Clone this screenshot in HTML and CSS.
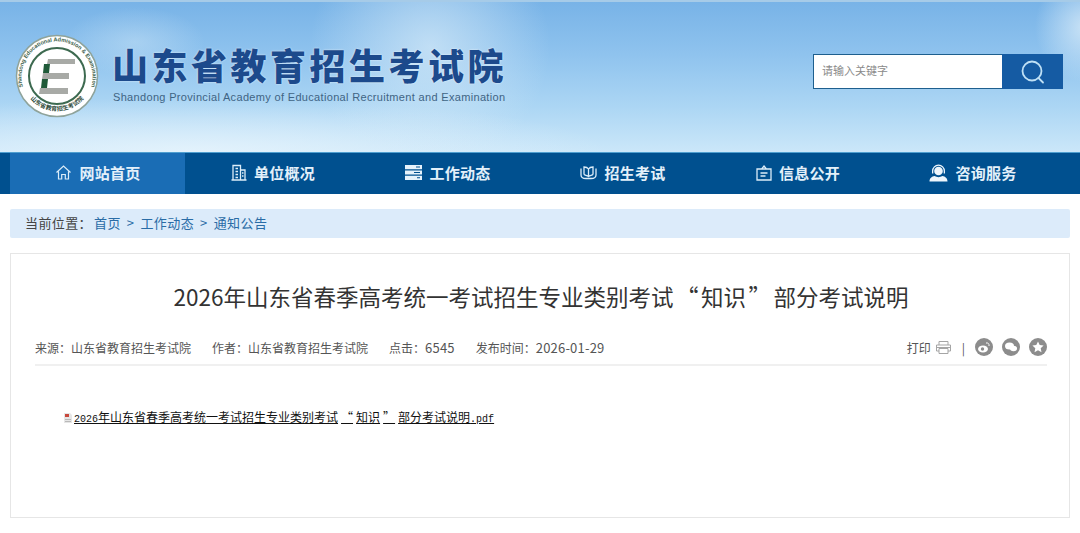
FILE: index.html
```html
<!DOCTYPE html>
<html lang="zh-CN">
<head>
    <meta charset="UTF-8">
    <meta name="viewport" content="width=device-width, initial-scale=1.0">
    <title>2026年山东省春季高考统一考试招生专业类别考试“知识”部分考试说明</title>
    <link rel="stylesheet" href="styles.css">
</head>
<body>
    <header class="site-header">
        <div class="brand">
            <svg class="logo" width="84" height="84" viewBox="0 0 84 84">
                <defs>
                    <path id="ringTop" d="M9 56 A35.500 35.500 0 1 1 75 56"/>
                    <path id="ringBottom" d="M14 63 A35 35 0 0 0 70 63"/>
                </defs>
                <circle cx="42" cy="42" r="40.500" fill="#fff" stroke="#8fa39a" stroke-width="1.500"/>
                <circle cx="42" cy="42" r="28" fill="#fff" stroke="#3d6a50" stroke-width="2"/>
                <text class="logo-en"><textPath href="#ringTop" startOffset="50%" text-anchor="middle">Shandong Educational Admission &amp; Examination</textPath></text>
                <text class="logo-cn"><textPath href="#ringBottom" startOffset="50%" text-anchor="middle">山东省教育招生考试院</textPath></text>
                <path d="M33 25H60V30H32Z M28 39H54V45H27Z M25 54H53V60H24Z" fill="#a8aaa6"/>
                <path d="M29 30H35L34 39H28Z M27 45H33L32 54H26Z" fill="#1f5a38"/>
            </svg>
            <div class="brand-text">
                <div class="brand-cn">山东省教育招生考试院</div>
                <div class="brand-en">Shandong Provincial Academy of Educational Recruitment and Examination</div>
            </div>
        </div>
        <form class="search">
            <div class="search-input">请输入关键字</div>
            <div class="search-btn">
                <svg width="26" height="26" viewBox="0 0 26 26" fill="none" stroke="#bfe0f5" stroke-width="1.800">
                    <circle cx="12" cy="12" r="9.500"/>
                    <path d="M18.500 19L23 23.500" stroke-linecap="round"/>
                </svg>
            </div>
        </form>
    </header>

    <nav class="nav">
        <a class="nav-item active">
            <svg width="17" height="17" viewBox="0 0 17 17" fill="none" stroke="#dcedf9" stroke-width="1.200"><path d="M1.500 8.500L8.500 2l7 6.500M3.500 7.500V15h3.200v-4.500h3.600V15h3.200V7.500"/></svg>
            网站首页
        </a>
        <a class="nav-item">
            <svg width="16" height="17" viewBox="0 0 16 17" fill="none" stroke="#dcedf9" stroke-width="1.300"><path d="M2 16V1.500h7.500V16M9.500 6H14v10M0.500 16h15M4.500 4.500h2.500M4.500 7.500h2.500M4.500 10.500h2.500M4.500 13.500h2.500M11 9h1.500M11 12h1.500"/></svg>
            单位概况
        </a>
        <a class="nav-item">
            <svg width="17" height="17" viewBox="0 0 17 17" fill="#e6f2fb"><path d="M0 1h17v4.200H0zM0 6.400h17v4.200H0zM0 11.800h17V16H0z"/><path d="M11 2.500h4v1h-4zM9 8h6v1H9zM12 13.300h3v1h-3z" fill="#00508f"/></svg>
            工作动态
        </a>
        <a class="nav-item">
            <svg width="17" height="15" viewBox="0 0 17 15" fill="none" stroke="#dcedf9" stroke-width="1.300"><path d="M1 3.500V10c0 2.500 2.500 3.500 5 3.500h5c2.500 0 5-1 5-3.500V3.500"/><path d="M8.500 4C7.500 2.500 6 2 4 2v7c0 1.500 3 1 4.500 2.500C10 10 13 10.500 13 9V2c-2 0-3.500.5-4.500 2zV11"/></svg>
            招生考试
        </a>
        <a class="nav-item">
            <svg width="16" height="16" viewBox="0 0 16 16" fill="none" stroke="#dcedf9" stroke-width="1.300"><path d="M1 4h14v11H1zM8 1l2.500 3h-5zM4.500 8h7M4.500 11h5"/></svg>
            信息公开
        </a>
        <a class="nav-item">
            <svg width="19" height="18" viewBox="0 0 19 18" fill="#eef6fc"><path d="M9.500.5a6.500 6.500 0 0 1 6.500 6.500v2.500h-1.300V7a5.200 5.200 0 0 0-10.400 0v2.500H3V7A6.500 6.500 0 0 1 9.500.5z"/><circle cx="9.500" cy="7" r="4.300"/><path d="M.5 17.500c0-3.500 2.500-5 5-5.500 2.500 1.500 5.500 1.500 8 0 2.500.5 5 2 5 5.500z"/></svg>
            咨询服务
        </a>
    </nav>

    <main class="content">
        <div class="crumbs">
            <span class="here">当前位置：</span><a>首页</a><span class="sep">&gt;</span><a>工作动态</a><span class="sep">&gt;</span><a>通知公告</a>
        </div>

        <article class="card">
            <h1 class="title">2026年山东省春季高考统一考试招生专业类别考试<span class="q">“</span>知识<span class="q">”</span>部分考试说明</h1>
            <div class="meta">
                <div class="meta-left">
                    <span>来源：山东省教育招生考试院</span>
                    <span>作者：山东省教育招生考试院</span>
                    <span>点击：<span class="num">6545</span></span>
                    <span>发布时间：<span class="num">2026-01-29</span></span>
                </div>
                <div class="meta-right">
                    <span class="print">打印</span>
                    <svg class="print-icon" width="15" height="15" viewBox="0 0 15 15" fill="none" stroke="#a5a5a5"><path d="M3 5V1.500h9V5M3 11H.5V5h14v6H12M3 8.500h9V13.500H3zM1 7.500h13"/></svg>
                    <span class="divider">|</span>
                    <svg class="share" width="18" height="18" viewBox="0 0 18 18"><circle cx="9" cy="9" r="9" fill="#8c8c8c"/><ellipse cx="8" cy="11" rx="5" ry="3.500" fill="#fff"/><circle cx="7.500" cy="11" r="1.700" fill="#8c8c8c"/><path d="M11 5c2-.5 3.500 1 3 3" fill="none" stroke="#fff"/></svg>
                    <svg class="share" width="18" height="18" viewBox="0 0 18 18"><circle cx="9" cy="9" r="9" fill="#8c8c8c"/><ellipse cx="7.500" cy="8" rx="4.500" ry="3.500" fill="#fff"/><ellipse cx="11.500" cy="10.500" rx="3.500" ry="2.800" fill="#fff"/></svg>
                    <svg class="share" width="18" height="18" viewBox="0 0 18 18"><circle cx="9" cy="9" r="9" fill="#8c8c8c"/><path d="M9 3.500l1.700 3.600 3.900.5-2.900 2.700.8 3.900L9 12.300l-3.500 1.900.8-3.900-2.900-2.700 3.900-.5z" fill="#fff"/></svg>
                </div>
            </div>
            <p class="attachment">
                <svg width="8" height="10" viewBox="0 0 8 10"><path d="M0 0h6l2 2v8H0z" fill="#e6e6e6"/><path d="M1 1h4v3H1z" fill="#c8483c"/><path d="M1 6h6v1H1zM1 8h6v1H1z" fill="#b9b9b9"/></svg>
                <a><span class="mono">2026</span>年山东省春季高考统一考试招生专业类别考试<span class="wq">“</span>知识<span class="wq">”</span>部分考试说明<span class="mono">.pdf</span></a>
            </p>
        </article>
    </main>
</body>
</html>
```

FILE: styles.css
```css
* {
    box-sizing: border-box;
}
body {
    margin: 0;
    background-color: #fff;
    color: #333;
    font-family: "Noto Sans CJK SC", sans-serif;
}
.site-header {
    height: 152px;
    display: flex;
    justify-content: space-between;
    align-items: flex-start;
    padding: 34px 17px 0 15px;
    border-top: 2px solid #a6cbe8;
    background:
        radial-gradient(ellipse 50px 55px at 1085px 25px, rgba(225, 240, 250, .75), rgba(225, 240, 250, 0)),
        radial-gradient(ellipse 120px 120px at 430px 45px, rgba(215, 235, 248, .7), rgba(215, 235, 248, 0)),
        radial-gradient(ellipse 70px 35px at 135px 40px, rgba(215, 235, 248, .4), rgba(215, 235, 248, 0)),
        radial-gradient(ellipse 420px 55px at 190px 150px, rgba(235, 246, 253, .75), rgba(235, 246, 253, 0)),
        linear-gradient(to bottom, #78b3e7 0%, #8fc3ee 35%, #acd6f4 70%, #cbe7f9 100%);
}
.brand {
    display: flex;
    align-items: flex-start;
    gap: 14px;
}
.logo {
    flex: none;
    margin-top: -2px;
}
.logo-en {
    font-family: "Liberation Sans", sans-serif;
    font-size: 5.600px;
    font-weight: bold;
    fill: #3d5f4c;
}
.logo-cn {
    font-size: 6px;
    font-weight: bold;
    fill: #2f4a3a;
}
.brand-text {
    padding-top: 5px;
}
.brand-cn {
    font-size: 36px;
    line-height: 46px;
    font-weight: 900;
    letter-spacing: 3.500px;
    white-space: nowrap;
    color: #1c4a8c;
    margin-left: -1px;
    text-shadow: 0 0 2px rgba(255, 255, 255, .8);
}
.brand-en {
    font-family: "Liberation Sans", sans-serif;
    font-size: 11px;
    line-height: 14px;
    letter-spacing: .33px;
    white-space: nowrap;
    color: #3f6484;
    margin-top: 3px;
}
.search {
    display: flex;
    height: 35px;
    margin: 18px 0 0;
}
.search-input {
    width: 189px;
    padding-left: 8px;
    border: 1px solid #1e5f8e;
    border-right: 0;
    background-color: #fff;
    color: #8a8a8a;
    font-size: 11px;
    line-height: 31px;
}
.search-btn {
    width: 61px;
    display: flex;
    align-items: center;
    justify-content: center;
    background-color: #155ba3;
}
.nav {
    height: 42px;
    display: flex;
    padding: 0 10px;
    background-color: #00508f;
    border-top: 1px solid #4f9fd0;
}
.nav-item {
    width: 175px;
    display: flex;
    align-items: center;
    justify-content: center;
    gap: 7px;
    padding: 0 0 2px 1px;
    color: #e3f0fa;
    font-size: 15px;
    font-weight: bold;
    letter-spacing: .3px;
}
.nav-item.active {
    background-color: #1a6db5;
}
.content {
    padding: 15px 10px 15px;
}
.crumbs {
    height: 29px;
    padding: 0 0 2px 15px;
    border-radius: 2px;
    background-color: #dcebfa;
    color: #444;
    font-size: 13px;
    letter-spacing: .4px;
    line-height: 27px;
}
.here {
    margin-right: 2px;
}
.crumbs a {
    color: #2a6ca6;
}
.sep {
    margin: 0 6px;
    color: #2a6ca6;
}
.card {
    height: 265px;
    margin-top: 15px;
    padding: 0 22px 0 24px;
    border: 1px solid #e6e6e6;
}
.title {
    margin: 0;
    padding-top: 26px;
    font-size: 22.500px;
    font-weight: normal;
    line-height: 33px;
    text-align: center;
    color: #333;
    white-space: nowrap;
}
.q {
    padding: 0 2.500px;
}
.meta {
    height: 33px;
    margin-top: 20px;
    padding-bottom: 3px;
    display: flex;
    justify-content: space-between;
    align-items: center;
    border-bottom: 2px solid #f0f0f0;
    font-size: 12px;
    color: #555;
}
.meta-left {
    display: flex;
    align-items: baseline;
    gap: 21px;
}
.num {
    font-size: 13px;
    letter-spacing: .2px;
}
.meta-right {
    display: flex;
    align-items: center;
}
.print-icon {
    margin-left: 5px;
}
.divider {
    margin: 0 10px 0 11px;
}
.share {
    margin-right: 9px;
}
.share:last-child {
    margin-right: 0;
}
.attachment {
    margin: 42px 0 0 29px;
    display: flex;
    align-items: center;
    gap: 2px;
    font-size: 12px;
    line-height: 17px;
    color: #111;
}
.attachment a {
    text-decoration: underline;
}
.wq {
    padding: 0 3px;
}
.mono {
    font-family: "Liberation Mono", monospace;
    font-size: 10px;
}
```
